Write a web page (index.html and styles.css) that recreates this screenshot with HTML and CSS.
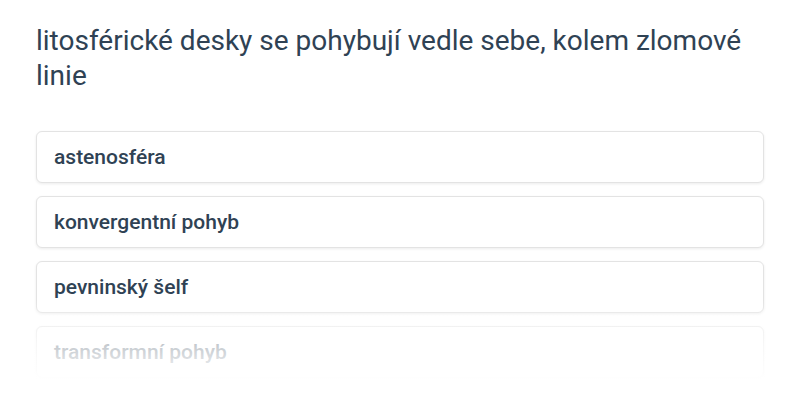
FILE: index.html
```html
<!DOCTYPE html>
<html lang="cs">
<head>
<meta charset="utf-8">
<link rel="stylesheet" href="styles.css">
</head>
<body>
<div class="quiz">
  <h1 class="question">litosférické desky se pohybují vedle sebe, kolem zlomové linie</h1>
  <div class="options">
    <div class="option">astenosféra</div>
    <div class="option">konvergentní pohyb</div>
    <div class="option">pevninský šelf</div>
    <div class="option">transformní pohyb</div>
  </div>
  <div class="fade"></div>
</div>
</body>
</html>
```
FILE: styles.css
```css
html, body {
  margin: 0;
  padding: 0;
  background: #ffffff;
}
body {
  width: 800px;
  height: 400px;
  overflow: hidden;
  font-family: Roboto, "Noto Sans", sans-serif;
}
.quiz {
  position: relative;
  height: 400px;
  padding: 23px 36px 0 36px;
  box-sizing: border-box;
}
.question {
  margin: 0;
  font-size: 28px;
  font-weight: 400;
  line-height: 35px;
  color: #2f4254;
}
.options {
  margin-top: 38px;
  display: flex;
  flex-direction: column;
  gap: 13px;
}
.option {
  height: 52px;
  box-sizing: border-box;
  border: 1px solid #e3e3e3;
  border-radius: 6px;
  box-shadow: 0 1px 3px rgba(0, 0, 0, 0.08);
  padding: 0 17px;
  display: flex;
  align-items: center;
  font-size: 21px;
  font-weight: 500;
  color: #2f4254;
  background: #fff;
}
.fade {
  position: absolute;
  left: 0;
  right: 0;
  top: 300px;
  bottom: 0;
  background: linear-gradient(to bottom, rgba(255,255,255,0) 0px, rgba(255,255,255,0.5) 25px, rgba(255,255,255,0.72) 45px, #fff 82px);
}
```
